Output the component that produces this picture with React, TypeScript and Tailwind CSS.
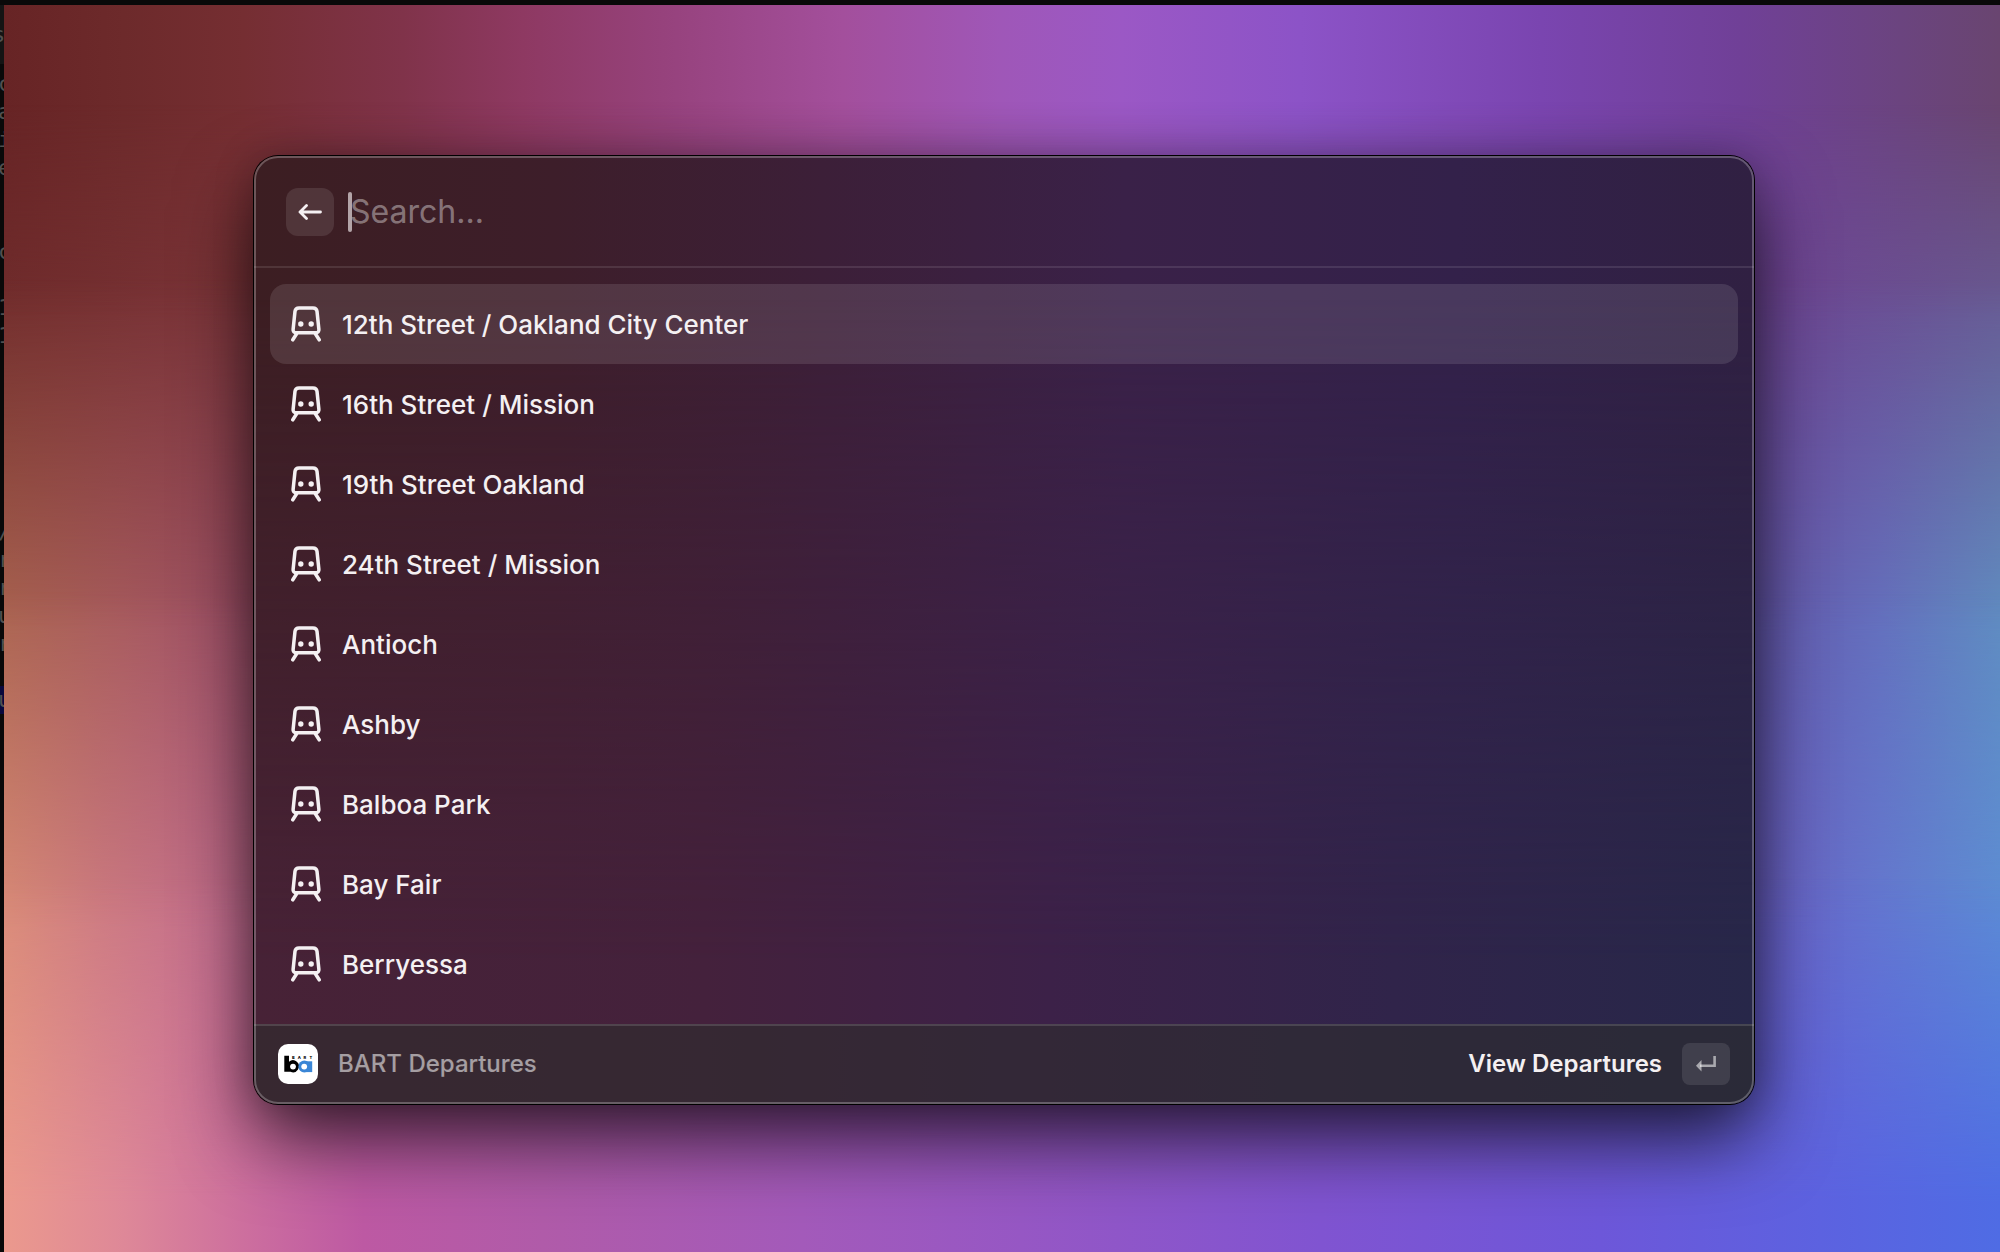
import React from "react";

const stations = [
  "12th Street / Oakland City Center",
  "16th Street / Mission",
  "19th Street Oakland",
  "24th Street / Mission",
  "Antioch",
  "Ashby",
  "Balboa Park",
  "Bay Fair",
  "Berryessa",
];

// Sliver of the editor that shows past the wallpaper's left edge, one entry per line.
const editorLines = ["c", "a", "i", "e", "", "", "c", "", "1", "1", "", "", "", "", "", "", "/", "r", "r", "u", "r", "", "u"];

function TrainIcon() {
  return (
    <svg viewBox="0 0 32 36" className="h-9 w-8 shrink-0" fill="none" stroke="currentColor" strokeWidth="3.5" strokeLinecap="round" strokeLinejoin="round" aria-hidden="true">
      <path d="M9 1.900h14c2.200 0 3.700 1.300 4 3.400l1.900 18.200c.2 2-1 3.200-2.900 3.200H6c-1.900 0-3.100-1.200-2.900-3.200L5 5.300C5.300 3.200 6.800 1.900 9 1.900z" />
      <path d="M6.500 28l-3.700 5.800M25.500 28l3.700 5.800" />
      <circle cx="10.800" cy="18" r="2.700" fill="currentColor" stroke="none" />
      <circle cx="21.200" cy="18" r="2.700" fill="currentColor" stroke="none" />
    </svg>
  );
}

function BartLogo() {
  return (
    <svg viewBox="0 0 40 40" className="size-10 shrink-0" role="img" aria-label="BART">
      <rect width="40" height="40" rx="10" fill="#fff" />
      <path d="M6.300 11.800h4.700v6a6 6 0 1 1 1.500 10H6.300z" fill="#000" />
      <circle cx="26.300" cy="22.500" r="5.900" fill="#3a86d6" />
      <rect x="27.500" y="17.300" width="6.700" height="10.800" fill="#3a86d6" />
      <circle cx="15" cy="22.600" r="2.900" fill="#fff" />
      <circle cx="26.200" cy="22.600" r="2.900" fill="#fff" />
      <text x="14 19.700 25.500 31.500" y="14.700" fontFamily="Inter, sans-serif" fontSize="4" fontWeight="800" fill="#000">BART</text>
    </svg>
  );
}

function Wallpaper() {
  return (
    <div className="absolute inset-0 overflow-hidden" aria-hidden="true">
      <div className="absolute inset-0 bg-[linear-gradient(90deg,#672425_0%,#6d2a2b_6%,#752e32_12%,#80334a_20%,#8e3962_26%,#96427c_33%,#a34f9c_42%,#9f57b8_50%,#9b58c5_56%,#8c53c7_65%,#7a45b0_77%,#704097_87%,#6b447f_95%,#694570_100%)]" />
      <div className="absolute inset-0 bg-[linear-gradient(90deg,#702c2c_0%,#7a3438_11%,#843a60_30%,#8c50a8_60%,#6d4592_89%,#685a93_100%)] mask-[linear-gradient(180deg,transparent_8%,black_25%)]" />
      <div className="absolute inset-0 bg-[linear-gradient(90deg,#a96350_0%,#a65a5d_6%,#9c4e66_12%,#7c4490_50%,#6458ab_88%,#6470bd_94%,#608cc0_100%)] mask-[linear-gradient(180deg,transparent_22%,black_50%)]" />
      <div className="absolute inset-0 bg-[linear-gradient(90deg,#d98b78_0%,#cc7a81_5%,#bf6a8d_12%,#9a50a0_40%,#6a60c4_88%,#6478cf_94%,#5d8cd4_100%)] mask-[linear-gradient(180deg,transparent_47%,black_74%)]" />
      <div className="absolute inset-0 bg-[linear-gradient(90deg,#eb998d_0%,#de8898_6%,#ca6b9f_13%,#bd59a3_18%,#b05ba9_27%,#a35aba_40%,#9657c4_51%,#8054d1_66%,#6d57d9_80%,#5c62e0_91%,#4f6ce4_100%)] mask-[linear-gradient(180deg,transparent_70%,black_96%)]" />
    </div>
  );
}

export default function App() {
  return (
    <div className="flex min-h-screen bg-[#090909] pt-[5px] font-['Inter',sans-serif] text-[#f4f0f2]">
      <div className="w-1 shrink-0 overflow-hidden font-['DejaVu_Sans_Mono',monospace] text-[22px] text-[#505050]" aria-hidden="true">
        <div className="mb-[6px] h-[59px] bg-[#141414] pt-3 leading-9">
          <div className="-ml-2">s</div>
        </div>
        {editorLines.map((line, i) => (
          <div key={i} className={i === editorLines.length - 1 ? "h-7 bg-[#08083c] leading-7" : "h-7 leading-7"}>
            <span className="-ml-0.5">{line}</span>
          </div>
        ))}
      </div>
      <main className="relative flex flex-1 items-start justify-center pt-[151px] pr-[246px] pl-[250px]">
        <Wallpaper />
        <section className="relative flex min-w-0 flex-1 flex-col overflow-hidden rounded-3xl bg-[linear-gradient(90deg,#3c1e22_0%,#3d1e2a_20%,#3c1f38_38%,#3a2148_58%,#33214a_80%,#302042_100%)] shadow-[0_0_0_1px_#000,0_36px_76px_rgba(0,0,0,0.68),0_0_40px_rgba(0,0,0,0.22)]">
          <div className="absolute inset-0 bg-[linear-gradient(90deg,#472236_0%,#44213c_30%,#3c2148_53%,#30244a_76%,#272749_100%)] mask-[linear-gradient(180deg,transparent_15%,black_85%)]" />
          <header className="relative flex h-28 items-center gap-4 border-b-2 border-white/10 px-8 pt-0.5">
            <button type="button" aria-label="Back" className="flex size-12 items-center justify-center rounded-xl bg-white/10">
              <svg viewBox="0 0 24 16" className="h-4 w-6" fill="none" stroke="currentColor" strokeWidth="2.800" strokeLinecap="round" strokeLinejoin="round" aria-hidden="true">
                <path d="M22.500 8H2M8.500 1.500L2 8l6.500 6.500" />
              </svg>
            </button>
            <div className="relative flex-1">
              <input type="text" aria-label="Search" placeholder="Search..." className="block h-12 w-full bg-transparent text-[32px] outline-none placeholder:text-white/40" />
              <span className="absolute top-1 -left-0.5 h-10 w-1 rounded-full bg-[#b3a4a8]" />
            </div>
          </header>
          <ul className="relative flex flex-col px-4 pt-4 pb-5">
            {stations.map((name, i) => (
              <li key={name}>
                <button type="button" className={i === 0 ? "flex h-20 w-full items-center gap-5 rounded-2xl bg-white/11 px-5 text-[26px] font-medium" : "flex h-20 w-full items-center gap-5 rounded-2xl px-5 text-[26px] font-medium"}>
                  <TrainIcon />
                  <span>{name}</span>
                </button>
              </li>
            ))}
          </ul>
          <footer className="relative flex h-20 items-center border-t-2 border-white/13 bg-[#2d2d2d]/60 px-6 pb-0.5 text-2xl font-medium">
            <BartLogo />
            <span className="ml-5 text-white/55">BART Departures</span>
            <button type="button" className="ml-auto flex items-center gap-5 font-semibold">
              View Departures
              <kbd className="flex h-[42px] w-12 items-center justify-center rounded-lg bg-white/10 text-white/55">
                <svg viewBox="0 0 20 16" className="h-4 w-5" fill="none" aria-hidden="true">
                  <path d="M18.600 0v9.800H4" stroke="currentColor" strokeWidth="2.600" />
                  <path d="M0 9.800l5.500-5.800v11.600z" fill="currentColor" />
                </svg>
              </kbd>
            </button>
          </footer>
          <div className="pointer-events-none absolute inset-0 rounded-3xl border-2 border-white/25" />
        </section>
      </main>
    </div>
  );
}
